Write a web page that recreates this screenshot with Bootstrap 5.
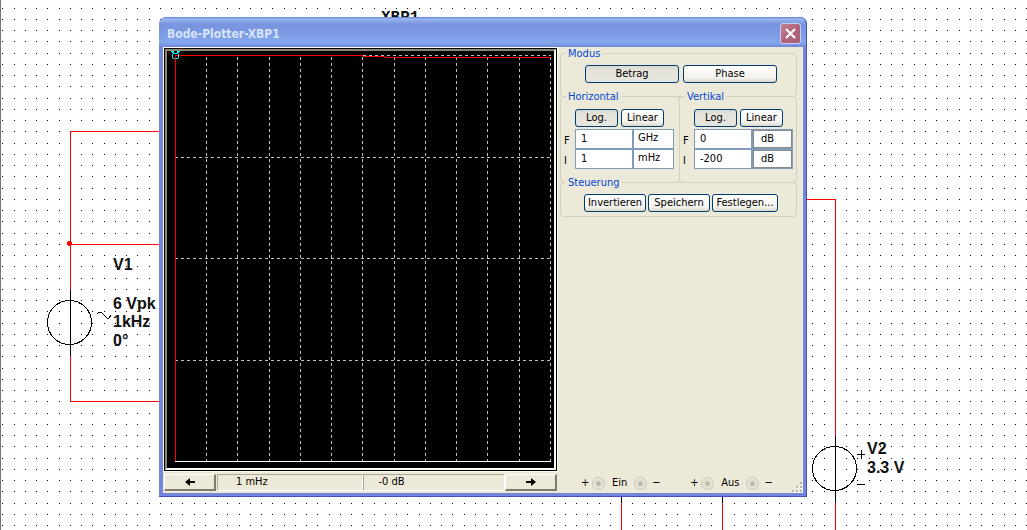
<!DOCTYPE html>
<html lang="de">
<head>
<meta charset="utf-8">
<meta name="viewport" content="width=device-width, initial-scale=1">
<title>Bode-Plotter-XBP1</title>
<link href="https://cdn.jsdelivr.net/npm/bootstrap@5.3.0/dist/css/bootstrap.min.css" rel="stylesheet">
<style>
  body { font: 11px/14px "DejaVu Sans Condensed", "DejaVu Sans", sans-serif; color: #000; background: #fff; }
  .sheet { min-height: 100vh; border-left: 1px solid #7b7768; }
  .sheet-art { left: -1px; top: 0; width: calc(100% + 1px); height: 100%; shape-rendering: crispEdges; }
  .sheet-art text { font: bold 16px "Liberation Sans", sans-serif; fill: #111; }
  .sheet-art .mono-tag { font-family: "Liberation Mono", monospace; }
  .wire { fill: none; stroke: #f00; }
  .lead-line { fill: none; stroke: #000; }

  .xp-window { left: 158px; top: 17px; width: 648px; max-width: 100%; background: #ece9d8;
    border: solid #7186dc; border-width: 0 4px 4px; border-radius: 7px 7px 0 0; }
  .xp-window::after { content: ""; position: absolute; inset: 0 -4px -4px; pointer-events: none;
    border: solid #4a4fb8; border-width: 0 1px 1px 0; border-radius: 7px 7px 0 0; }
  .xp-title { height: 30px; margin: 0 -4px; padding: 3px 6px 0 8px; border-radius: 7px 7px 0 0;
    background: linear-gradient(#5d80d8 0, #9db8ef 2px, #8aa9ea 4px, #7a95df 7px, #7b97e1 14px, #82a8ec 25px, #7f9fe8 27px, #7084da 30px); }
  .xp-title h1 { font: bold 12px/16px "DejaVu Sans Condensed", sans-serif; color: #d8e4f9; }
  .xp-close { width: 21px; height: 21px; border: 1px solid #c5cdf2; border-radius: 3px;
    background: linear-gradient(135deg, #c28391, #b0647b 50%, #a85d78); }

  .scope-col { flex: 0 1 394px; min-width: 0; padding: 1px 0 2px 1px; }
  .scope { border: 1px solid #000; background: #000; outline: 1px solid #fffef4; }
  .scope-bezel { border: 2px solid; border-color: #8a8776 #fffef4 #fffef4 #8a8776; }
  .scope svg { width: 100%; height: auto; shape-rendering: crispEdges; }
  .dash { fill: none; stroke: #c0c0c0; stroke-dasharray: 3 3; }
  .readout { margin-top: 3px; }
  .readout-btn { width: 52px; height: 17px; border: solid; border-width: 1px 2px 2px 1px; border-color: #fff #7f7c6c #7f7c6c #fff; background: #ece9d8; }
  .readout-cells { padding-left: 1px; }
  .readout-cell { flex: 1 1 0; height: 17px; padding-left: 18px; border: 1px solid; border-color: #aca899 #fff #fff #aca899; }
  .readout-cell + .readout-cell { padding-left: 15px; }

  .panel-col { padding: 6px 6px 3px 3px; }
  .group { border: 1px solid #d0d0bf; border-radius: 4px; }
  .group > legend { position: absolute; top: -7px; left: 5px; width: auto; padding: 0 2px; margin: 0;
    font-size: 11px; line-height: 14px; color: #0046d5; background: #ece9d8; float: none; }
  .group-half { flex: 1 1 0; }
  .group-wide { flex: 0 0 120px; margin-right: -1px; }
  .overlap { margin-top: -1px; }
  .row-mode { gap: 4px; padding: 11px 0 13px 24px; }
  .row-scale { gap: 3px; padding: 12px 0 2px 14px; }
  .row-ctl { gap: 2px; padding: 11px 0 4px 23px; }
  .xp-btn { height: 18px; padding: 0; font-size: 11px; line-height: 14px; color: #000; white-space: nowrap;
    border: 1px solid #003c74; border-radius: 3px; background: linear-gradient(#fff, #f3f2ec 75%, #dcd8cc); }
  .xp-btn.pressed { background: linear-gradient(#dcdbd2, #e4e3db 30%, #e6e5de); }
  .w-mode { width: 94px; } .w-scale { width: 43px; } .w-ctl { width: 62px; } .w-ctl-wide { width: 66px; }
  .limits { display: grid; grid-template-columns: 11px 58px 41px; grid-auto-rows: 20px; padding: 0 0 13px 3px; }
  .limits label { padding-top: 5px; }
  .limits input, .limits select { width: 100%; min-width: 0; height: 20px; padding: 0 4px 2px 5px; font-size: 11px; line-height: 14px; color: #000;
    background: #fff; border: 1px solid #7f9db9; border-radius: 0; appearance: none; }
  .limits select { padding-left: 4px; }
  .limits .sunken { box-shadow: inset 0 0 0 1px #8a8a8a; padding-left: 8px; }
  .terminals { gap: 31px; padding-left: 21px; }
  .terminals input { appearance: none; width: 13px; height: 13px; margin: 0; border: 1px solid #c9c7ba; border-radius: 50%;
    background: radial-gradient(circle, #bdbbae 0 2px, #e6e3d3 3px); }
  .terminals .pole { width: 7px; margin: 0 4px 0 0; text-align: center; }
  .terminals input + .pole { margin: 0 0 0 5px; }
  .terminals .port { padding: 0 7px; }
  .grip { right: 0; bottom: 0; }
</style>
<script src="https://cdn.jsdelivr.net/npm/bootstrap@5.3.0/dist/js/bootstrap.bundle.min.js"></script>
</head>
<body>
<main class="sheet position-relative overflow-hidden">
  <svg class="sheet-art position-absolute" role="img" aria-label="Schaltplan">
    <defs>
      <pattern id="dots" width="45" height="45" patternUnits="userSpaceOnUse">
        <path stroke="#000" fill="none" d="M2 8.500h1m11 0h1m10 0h1m10 0h1M2 19.500h1m11 0h1m10 0h1m10 0h1M2 30.500h1m11 0h1m10 0h1m10 0h1M2 41.500h1m11 0h1m10 0h1m10 0h1"/>
      </pattern>
    </defs>
    <rect width="100%" height="100%" fill="url(#dots)"/>
    <text class="mono-tag" x="381" y="22">XBP1</text>
    <path class="wire" d="M160 131.500H70.500V401.500H160M70 244.500H160"/>
    <circle cx="69.500" cy="243.500" r="2.500" fill="#f00"/>
    <path class="lead-line" d="M70.500 290V356"/>
    <circle class="lead-line" cx="69.500" cy="322.500" r="22"/>
    <path class="lead-line" d="M97 314l2-2h2l6 6h2l2-3"/>
    <text x="113" y="270">V1</text>
    <text x="113" y="309">6 Vpk</text>
    <text x="113" y="327">1kHz</text>
    <text x="113" y="346">0°</text>
    <path class="wire" d="M806 199.500H835.500V436M835.500 503V1200M621.500 503V1200M722.500 503V1200"/>
    <path class="lead-line" d="M835.500 436V503M621.500 496V503M722.500 496V503M857 454.500h8M861.500 450v9M857 484.500h8"/>
    <circle class="lead-line" cx="834.500" cy="468.500" r="22"/>
    <text x="867" y="454">V2</text>
    <text x="867" y="473">3.3 V</text>
  </svg>

  <section class="xp-window position-absolute" aria-label="Bode-Plotter-XBP1">
    <header class="xp-title d-flex align-items-center justify-content-between">
      <h1 class="m-0">Bode-Plotter-XBP1</h1>
      <button type="button" class="xp-close d-flex align-items-center justify-content-center p-0" aria-label="Schließen">
        <svg width="11" height="11" viewBox="0 0 11 11"><path d="M1 1l9 9M10 1l-9 9" stroke="#fff" stroke-width="2.200"/></svg>
      </button>
    </header>

    <div class="d-flex position-relative">
      <div class="scope-col">
        <div class="scope">
          <div class="scope-bezel">
            <svg class="d-block" viewBox="1 0 387 417" role="img" aria-label="Frequenzgang">
              <path class="dash" d="M40.500 6V410M71.500 6V410M103.500 6V410M134.500 6V410M165.500 6V410M196.500 6V410M228.500 6V410M259.500 6V410M290.500 6V410M321.500 6V410M353.500 6V410M384.500 6V410M9 106.500H385M9 207.500H385M9 309.500H385M197 4.500H385"/>
              <path d="M9 410.500H385" stroke="#fff"/>
              <path d="M9.500 410V4.500H197M197 5.500H219M219 6.500H385" fill="none" stroke="#f00"/>
              <path d="M5 .5h3M11 .5h3M6 1.500h2M11 1.500h2M7 2.500h5M6.500 3v4M12.500 3v4M7 7.500h2M10 7.500h2" fill="none" stroke="#0ff"/>
            </svg>
          </div>
        </div>
        <div class="readout d-flex">
          <button type="button" class="readout-btn d-flex align-items-center justify-content-center p-0" aria-label="Cursor nach links">
            <svg width="10" height="8" viewBox="0 0 10 8"><path d="M0 4l5-4v3h5v2H5v3z"/></svg>
          </button>
          <div class="readout-cells d-flex flex-grow-1">
            <output class="readout-cell">1 mHz</output>
            <output class="readout-cell">-0 dB</output>
          </div>
          <button type="button" class="readout-btn d-flex align-items-center justify-content-center p-0" aria-label="Cursor nach rechts">
            <svg width="10" height="8" viewBox="0 0 10 8"><path d="M10 4L5 0v3H0v2h5v3z"/></svg>
          </button>
        </div>
      </div>

      <form class="panel-col d-flex flex-column flex-grow-1">
        <fieldset class="group position-relative">
          <legend>Modus</legend>
          <div class="row-mode d-flex">
            <button type="button" class="xp-btn pressed w-mode">Betrag</button>
            <button type="button" class="xp-btn w-mode">Phase</button>
          </div>
        </fieldset>
        <div class="overlap d-flex">
          <fieldset class="group group-wide position-relative">
            <legend>Horizontal</legend>
            <div class="row-scale d-flex">
              <button type="button" class="xp-btn pressed w-scale">Log.</button>
              <button type="button" class="xp-btn w-scale">Linear</button>
            </div>
            <div class="limits">
              <label for="hf">F</label><input id="hf" value="1"><select aria-label="Einheit F horizontal"><option>GHz</option></select>
              <label for="hi">I</label><input id="hi" value="1"><select aria-label="Einheit I horizontal"><option>mHz</option></select>
            </div>
          </fieldset>
          <fieldset class="group group-half position-relative">
            <legend>Vertikal</legend>
            <div class="row-scale d-flex">
              <button type="button" class="xp-btn pressed w-scale">Log.</button>
              <button type="button" class="xp-btn w-scale">Linear</button>
            </div>
            <div class="limits">
              <label for="vf">F</label><input id="vf" value="0"><input class="sunken" aria-label="Einheit F vertikal" value="dB" readonly>
              <label for="vi">I</label><input id="vi" value="-200"><input class="sunken" aria-label="Einheit I vertikal" value="dB" readonly>
            </div>
          </fieldset>
        </div>
        <fieldset class="group overlap position-relative">
          <legend>Steuerung</legend>
          <div class="row-ctl d-flex">
            <button type="button" class="xp-btn w-ctl">Invertieren</button>
            <button type="button" class="xp-btn w-ctl">Speichern</button>
            <button type="button" class="xp-btn w-ctl-wide">Festlegen...</button>
          </div>
        </fieldset>
        <div class="terminals d-flex mt-auto">
          <div class="d-flex align-items-center"><span class="pole">+</span><input type="radio" disabled aria-label="Ein plus"><span class="port">Ein</span><input type="radio" disabled aria-label="Ein minus"><span class="pole">−</span></div>
          <div class="d-flex align-items-center"><span class="pole">+</span><input type="radio" disabled aria-label="Aus plus"><span class="port">Aus</span><input type="radio" disabled aria-label="Aus minus"><span class="pole">−</span></div>
        </div>
      </form>
      <svg class="grip position-absolute" width="12" height="12" viewBox="0 0 12 12" aria-hidden="true">
        <path d="M9 2h2M5 6h2M9 6h2M1 10h2M5 10h2M9 10h2" transform="translate(1 1)" stroke="#fff" stroke-width="2"/>
        <path d="M9 2h2M5 6h2M9 6h2M1 10h2M5 10h2M9 10h2" stroke="#b8b4a2" stroke-width="2"/>
      </svg>
    </div>
  </section>
</main>
</body>
</html>
